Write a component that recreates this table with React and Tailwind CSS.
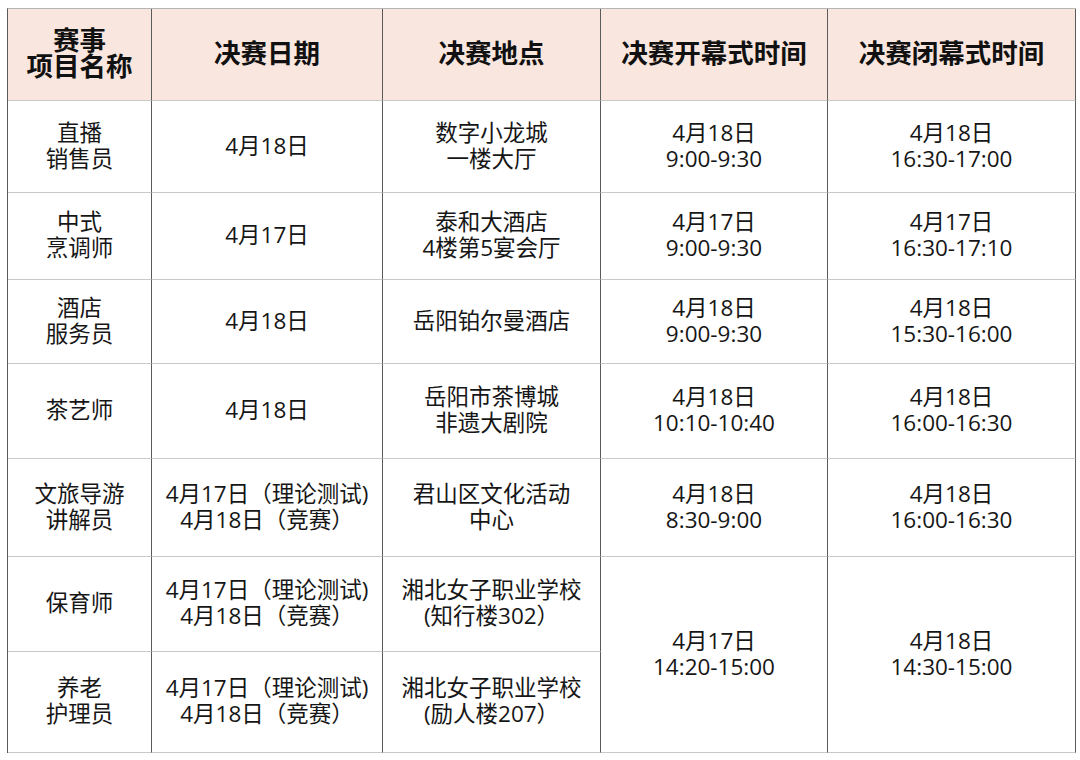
import React from 'react';

const headers = ['赛事\n项目名称', '决赛日期', '决赛地点', '决赛开幕式时间', '决赛闭幕式时间'];
const widths = [144, 231, 218, 227, 248];

const rows = [
  { h: 'h-[92px]', name: '直播\n销售员', date: '4月18日', place: '数字小龙城\n一楼大厅', open: '4月18日\n9:00-9:30', close: '4月18日\n16:30-17:00' },
  { h: 'h-[87px]', name: '中式\n烹调师', date: '4月17日', place: '泰和大酒店\n4楼第5宴会厅', open: '4月17日\n9:00-9:30', close: '4月17日\n16:30-17:10' },
  { h: 'h-[84px]', name: '酒店\n服务员', date: '4月18日', place: '岳阳铂尔曼酒店', open: '4月18日\n9:00-9:30', close: '4月18日\n15:30-16:00' },
  { h: 'h-[95px]', name: '茶艺师', date: '4月18日', place: '岳阳市茶博城\n非遗大剧院', open: '4月18日\n10:10-10:40', close: '4月18日\n16:00-16:30' },
  { h: 'h-[98px]', name: '文旅导游\n讲解员', date: '4月17日（理论测试)\n4月18日（竞赛）', place: '君山区文化活动\n中心', open: '4月18日\n8:30-9:00', close: '4月18日\n16:00-16:30' },
  { h: 'h-[95px]', name: '保育师', date: '4月17日（理论测试)\n4月18日（竞赛）', place: '湘北女子职业学校\n(知行楼302）', open: '4月17日\n14:20-15:00', close: '4月18日\n14:30-15:00', span: true },
  { h: 'h-[101px]', name: '养老\n护理员', date: '4月17日（理论测试)\n4月18日（竞赛）', place: '湘北女子职业学校\n(励人楼207）', skip: true },
];

const cell = 'border-r border-b border-r-[#5a5a5a] border-b-[#c9c9c9] text-center align-middle whitespace-pre-line p-0';

export default function App() {
  return (
    <div className="w-[1080px] h-[760px] bg-white pt-[8px] pl-[7px]">
      <table className="table-fixed border-separate border-spacing-0 border-l border-t border-l-[#5a5a5a] border-t-[#b5b5b5] text-[#161616] w-[1068px]">
        <colgroup>
          {widths.map((w, i) => (
            <col key={i} style={{ width: w }} />
          ))}
        </colgroup>
        <thead>
          <tr>
            {headers.map((t) => (
              <th
                key={t}
                className={`${cell} pb-[6px] h-[92px] bg-[#f9e6de] border-b-[#8a8a8a] text-[26.5px] leading-[26px] font-bold text-[#111]`}
                style={{ fontFamily: '"Noto Sans CJK SC", sans-serif' }}
              >
                {t}
              </th>
            ))}
          </tr>
        </thead>
        <tbody className="text-[22.5px] leading-[26px]" style={{ fontFamily: '"Open Sans", "Noto Sans CJK SC", sans-serif' }}>
          {rows.map((r, i) => (
            <tr key={i}>
              <td className={`${cell} pb-[2px] ${r.h} ${i === rows.length - 1 ? 'border-b-[#8a8a8a]' : ''}`}>{r.name}</td>
              <td className={`${cell} pb-[2px] ${r.h} ${i === rows.length - 1 ? 'border-b-[#8a8a8a]' : ''}`}>{r.date}</td>
              <td className={`${cell} pb-[2px] ${r.h} ${i === rows.length - 1 ? 'border-b-[#8a8a8a]' : ''}`}>{r.place}</td>
              {!r.skip && (
                <td rowSpan={r.span ? 2 : 1} className={`${cell} pb-[2px] ${r.span ? 'border-b-[#8a8a8a]' : ''}`}>{r.open}</td>
              )}
              {!r.skip && (
                <td rowSpan={r.span ? 2 : 1} className={`${cell} pb-[2px] ${r.span ? 'border-b-[#8a8a8a]' : ''}`}>{r.close}</td>
              )}
            </tr>
          ))}
        </tbody>
      </table>
    </div>
  );
}
